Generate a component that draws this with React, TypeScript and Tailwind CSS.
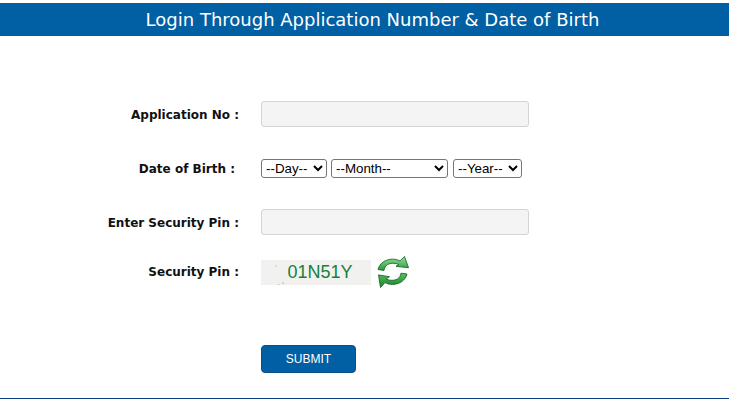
const labelClass = "w-[239px] text-right text-[12px] font-bold text-[#111] font-['DejaVu_Sans',sans-serif]";
const selectClass = "h-[19px] rounded-[3px] border border-[#767676] bg-white text-[13.33px] text-black appearance-auto font-['Liberation_Sans',sans-serif]";
const inputClass = "h-[26px] w-[268px] rounded-[3px] border border-[#d4d4d4] bg-[#f4f4f4] outline-none";

function RefreshIcon() {
  return (
    <svg width="32" height="32" viewBox="5.5 3 32 35.5" preserveAspectRatio="none">
      <defs>
        <linearGradient id="top" x1="0" y1="0" x2="0" y2="1">
          <stop offset="0" stopColor="#9be09a" />
          <stop offset="1" stopColor="#249a38" />
        </linearGradient>
        <linearGradient id="bottom" x1="0" y1="0" x2="0" y2="1">
          <stop offset="0" stopColor="#58c060" />
          <stop offset="1" stopColor="#15822c" />
        </linearGradient>
      </defs>
      <path d="M6.5 18 C8 11 14 6.5 21 6.5 C24 6.5 26 7 28.5 8.5 L33 3.5 L37 16 L24.5 14.5 L27.5 12.5 C24 10.5 19 10.5 16 12.5 C14 14 13 16 12.5 19 Z" fill="url(#top)" stroke="#136424" strokeWidth="0.9" />
      <path d="M35.5 23 C34 30 28 34.5 21 34.5 C18 34.5 16 34 13.5 32.5 L9 38 L7 24 L18 26 L14.5 28.5 C18 30.5 23 30.5 26 28.5 C28 27 29 25 29.5 22 Z" fill="url(#bottom)" stroke="#136424" strokeWidth="0.9" />
    </svg>
  );
}

export default function App() {
  return (
    <main className="h-[410px] w-[729px] bg-white pt-[3px]">
      <h1 className="flex h-[33px] items-center justify-center bg-[#0060a3] pl-[16px] text-[18px] font-normal text-white font-['DejaVu_Sans',sans-serif]">
        Login Through Application Number &amp; Date of Birth
      </h1>

      <form className="flex h-[363px] flex-col border-b border-[#0a3d80] pt-[65px]">
        <div className="flex items-center gap-[22px]">
          <label className={labelClass + " pt-[2px]"}>Application No :</label>
          <input className={inputClass} />
        </div>

        <div className="mt-[32px] flex items-center gap-[22px]">
          <label className={labelClass + " pr-[4px]"}>Date of Birth :</label>
          <div className="flex gap-[4px]">
            <select className={selectClass + " w-[66px]"}>
              <option>--Day--</option>
            </select>
            <select className={selectClass + " w-[117px]"}>
              <option>--Month--</option>
            </select>
            <select className={selectClass + " ml-[1px] w-[69px]"}>
              <option>--Year--</option>
            </select>
          </div>
        </div>

        <div className="mt-[31px] flex items-center gap-[22px]">
          <label className={labelClass + " pt-[2px]"}>Enter Security Pin :</label>
          <input className={inputClass} />
        </div>

        <div className="mt-[21px] flex items-center gap-[22px]">
          <label className={labelClass}>Security Pin :</label>
          <div className="flex items-center gap-[6px]">
            <div className="relative flex h-[25px] w-[110px] items-center justify-center bg-[#f1f2ef] pl-[8px] text-[18px] text-[#17803c] font-['Liberation_Sans',sans-serif]">
              01N51Y
              <span className="absolute left-[14px] top-[5px] h-[2px] w-[2px] bg-[#dcdcdc]" />
              <span className="absolute left-[21px] top-[22px] h-[2px] w-[2px] bg-[#c8d8c8]" />
              <span className="absolute left-[17px] top-[24px] h-[1px] w-[2px] bg-[#d4d4d4]" />
            </div>
            <RefreshIcon />
          </div>
        </div>

        <div className="mt-[57px] pl-[261px]">
          <button type="button" className="h-[28px] w-[95px] rounded-[4px] border border-[#0a4f8a] bg-[#0060a3] text-[12px] font-normal text-white font-['Liberation_Sans',sans-serif]">
            SUBMIT
          </button>
        </div>
      </form>
    </main>
  );
}
